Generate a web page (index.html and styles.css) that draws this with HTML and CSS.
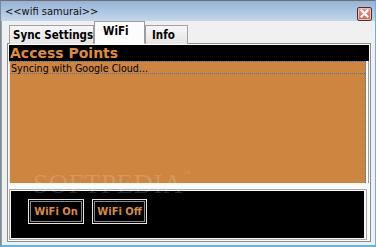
FILE: index.html
```html
<!DOCTYPE html>
<html>
<head>
<meta charset="utf-8">
<link rel="stylesheet" href="styles.css">
</head>
<body>
<div class="window">
  <div class="titlebar">
    <span class="title">&lt;&lt;wifi samurai&gt;&gt;</span>
    <span class="close">
      <svg width="9" height="9" viewBox="0 0 9 9"><path d="M1.5 1.5 L7.5 7.5 M7.5 1.5 L1.5 7.5" stroke="#fff" stroke-width="2.2" stroke-linecap="square"/></svg>
    </span>
  </div>
  <div class="client">
    <div class="tabs">
      <div class="tab">Sync Settings</div>
      <div class="tab active">WiFi</div>
      <div class="tab">Info</div>
    </div>
    <div class="panel">
      <div class="ap-header">Access Points</div>
      <div class="list">
        <div class="item">Syncing with Google Cloud...</div>
      </div>
      <div class="controls">
        <div class="controls-inner">
          <span class="btn">WiFi On</span>
          <span class="btn">WiFi Off</span>
        </div>
      </div>
    </div>
    <div class="watermark">SOFTPEDIA<sup>™</sup></div>
  </div>
</div>
</body>
</html>
```
FILE: styles.css
```css
* { box-sizing: border-box; }
html, body { margin: 0; padding: 0; }
body {
  width: 376px;
  height: 247px;
  overflow: hidden;
  font-family: "DejaVu Sans Condensed", "DejaVu Sans", Verdana, sans-serif;
  font-stretch: condensed;
}
.window {
  width: 376px;
  height: 247px;
  border-top: 1px solid #6f6f6f;
  border-left: 1px solid #7d8a96;
  border-right: 1px solid #5ab8e6;
  border-bottom: 2px solid #5ab8e6;
  display: flex;
  flex-direction: column;
  background: #f0f0f0;
}
.titlebar {
  height: 20px;
  flex: none;
  display: flex;
  align-items: center;
  justify-content: space-between;
  padding: 0 3px 0 4px;
  background: linear-gradient(#95b2d6, #c3d7ed);
}
.title {
  font-size: 11px;
  color: #111;
  margin-top: 1px;
  white-space: nowrap;
}
.close {
  width: 15px;
  height: 14px;
  margin-top: 5px;
  border: 1px solid #5a2a2a;
  border-radius: 2px;
  background: linear-gradient(#e0978a, #c9685b);
  display: flex;
  align-items: center;
  justify-content: center;
  box-shadow: inset 0 0 0 1px #f0bfb4;
}
.client {
  flex: 1;
  position: relative;
  padding: 0 3px 3px 5px;
  display: flex;
  flex-direction: column;
  border-left: 1px solid #9aa0a8;
}
.tabs {
  height: 22px;
  flex: none;
  display: flex;
  align-items: flex-end;
  padding-left: 2px;
  position: relative;
  z-index: 1;
}
.tab {
  height: 19px;
  font-size: 11.5px;
  font-weight: bold;
  color: #000;
  background: linear-gradient(#f7f7f7, #e4e4e4);
  border: 1px solid #a0a0a0;
  border-bottom: none;
  display: flex;
  align-items: center;
  margin-bottom: -1px;
  white-space: nowrap;
}
.tab:first-child { width: 85px; padding-left: 3px; }
.tab.active {
  height: 23px;
  width: 51px;
  background: #fcfcfc;
  align-items: flex-start;
  padding: 2px 0 0 8px;
  border-color: #9c9c9c;
  border-bottom: 1px solid #fcfcfc;
}
.tab:last-child { width: 43px; padding-left: 6px; }
.panel {
  flex: 1;
  border: 1px solid #8c8c8c;
  background: #fbfbfb;
  padding: 0 2px 1px 1px;
  display: flex;
  flex-direction: column;
  margin-right: 1px;
}
.ap-header {
  height: 17px;
  flex: none;
  background: #000;
  color: #de8c3d;
  font-family: "DejaVu Sans", Verdana, sans-serif;
  font-stretch: normal;
  font-size: 14px;
  font-weight: bold;
  padding-left: 1px;
  line-height: 16px;
  border-top: 1px solid #fff;
  margin-right: -1px;
  white-space: nowrap;
}
.list {
  height: 122px;
  flex: none;
  background: #cd853f;
  border-top: 1px dotted #3c7ab8;
  border-right: 1px dotted #3c7ab8;
  margin-right: 2px;
  border-left: 1px solid #e6e6e6;
  box-shadow: 2px 0 0 #fff, 3px 0 0 #9a9a9a;
}
.item {
  height: 12px;
  font-size: 10.6px;
  line-height: 12px;
  color: #000;
  padding-left: 1px;
  border-bottom: 1px dotted #3c7ab8;
  white-space: nowrap;
}
.controls {
  margin-top: 6px;
  flex: 1;
  border: 1px solid #a8a8a8;
  padding: 1px 2px 1px 1px;
  background: #fafafa;
  margin-right: 1px;
  display: flex;
}
.controls-inner {
  flex: 1;
  background: #000;
  display: flex;
  gap: 8px;
  padding: 8px 0 0 17px;
  align-items: flex-start;
}
.btn {
  height: 25px;
  display: flex;
  align-items: center;
  justify-content: center;
  border: 1px solid #e6e6e6;
  box-shadow: inset 0 0 0 1px #000, inset 0 0 0 2px #8a8a8a;
  color: #d88b3f;
  font-size: 11px;
  font-weight: bold;
  white-space: nowrap;
}
.btn:first-child { width: 56px; }
.btn:last-child { width: 55px; }
.watermark {
  position: absolute;
  left: 31px;
  top: 148px;
  font-family: "Liberation Serif", serif;
  font-size: 27px;
  letter-spacing: 0.5px;
  color: rgba(255, 255, 255, 0.16);
  pointer-events: none;
  white-space: nowrap;
}
.watermark sup { font-size: 8px; vertical-align: top; }
```
